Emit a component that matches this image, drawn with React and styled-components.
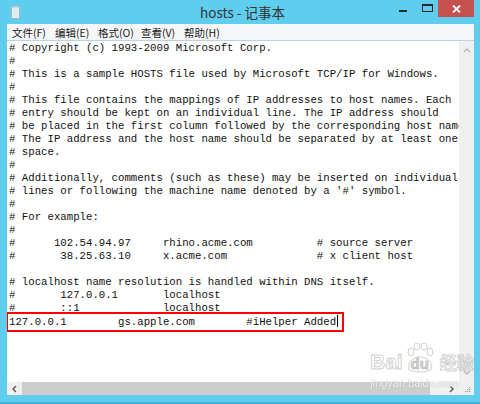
import React from "react";
import styled, { createGlobalStyle } from "styled-components";

const GlobalStyle = createGlobalStyle`
  html, body {
    margin: 0;
    padding: 0;
    background: #5fcdee;
  }
`;

const hostLines = [
  "# Copyright (c) 1993-2009 Microsoft Corp.",
  "#",
  "# This is a sample HOSTS file used by Microsoft TCP/IP for Windows.",
  "#",
  "# This file contains the mappings of IP addresses to host names. Each",
  "# entry should be kept on an individual line. The IP address should",
  "# be placed in the first column followed by the corresponding host name.",
  "# The IP address and the host name should be separated by at least one",
  "# space.",
  "#",
  "# Additionally, comments (such as these) may be inserted on individual",
  "# lines or following the machine name denoted by a '#' symbol.",
  "#",
  "# For example:",
  "#",
  "#      102.54.94.97     rhino.acme.com          # source server",
  "#       38.25.63.10     x.acme.com              # x client host",
  "",
  "# localhost name resolution is handled within DNS itself.",
  "#       127.0.0.1       localhost",
  "#       ::1             localhost",
];

const addedLine = "127.0.0.1        gs.apple.com        #iHelper Added";

const menus = ["文件(F)", "编辑(E)", "格式(O)", "查看(V)", "帮助(H)"];

const Window = styled.div`
  position: relative;
  width: 480px;
  height: 404px;
  box-sizing: border-box;
  background: #5fcdee;
  border-bottom: 2px solid #45b3d8;
  display: flex;
  flex-direction: column;
  padding: 0 6px 7px 7px;
  overflow: hidden;
`;

const TitleBar = styled.div`
  height: 24px;
  display: grid;
  grid-template-columns: 1fr auto 1fr;
  align-items: start;
  margin: 0 -6px 0 -7px;
  padding: 0 6px 0 11px;
`;

const TitleIcon = styled.svg`
  margin-top: 6px;
  width: 9px;
  height: 13px;
`;

const Title = styled.div`
  font-family: "Noto Sans CJK SC", "Noto Sans", sans-serif;
  font-size: 13.5px;
  line-height: 24px;
  color: #333;
`;

const Controls = styled.div`
  justify-self: end;
  display: flex;
  align-items: flex-start;
`;

const CtrlButton = styled.div`
  width: ${(p) => p.$w}px;
  height: 17px;
  display: flex;
  align-items: center;
  justify-content: center;
  background: ${(p) => (p.$close ? "#c75050" : "transparent")};
`;

const MenuBar = styled.div`
  height: 16px;
  display: flex;
  align-items: center;
  background: #f5f6f7;
  border-bottom: 1px solid #b9d1ea;
`;

const MenuItem = styled.span`
  padding: 0 5px;
  width: 33px;
  font-family: "Noto Sans CJK SC", "Noto Sans", sans-serif;
  font-size: 10.5px;
  color: #1a1a1a;
  white-space: nowrap;
`;

const EditArea = styled.div`
  flex: 1;
  min-height: 0;
  display: grid;
  grid-template-columns: 1fr 15px;
  grid-template-rows: 1fr 13px;
  background: #fff;
`;

const TextPane = styled.div`
  overflow: hidden;
  padding: 1px 0 0 2px;
  font-family: "Liberation Mono", "DejaVu Sans Mono", monospace;
  font-size: 10.7px;
  line-height: 13px;
  color: #111;
`;

const Line = styled.div`
  height: 13px;
  white-space: pre;
`;

const Added = styled.span`
  display: inline-block;
  padding-right: 3px;
  outline: 2px solid #ff0000;
  outline-offset: 1px;
`;

const Caret = styled.span`
  display: inline-block;
  width: 1px;
  height: 12px;
  margin-left: 1px;
  vertical-align: -2px;
  background: #000;
`;

const VScroll = styled.div`
  background: #f0f0f0;
  display: flex;
  flex-direction: column;
  justify-content: space-between;
  align-items: center;
  padding: 6px 0 5px;
`;

const HScroll = styled.div`
  background: #f0f0f0;
  display: grid;
  grid-template-columns: 15px 1fr 15px;
  align-items: stretch;
`;

const ArrowCell = styled.div`
  display: flex;
  align-items: center;
  justify-content: center;
`;

const Track = styled.div`
  display: flex;
`;

const Thumb = styled.div`
  flex: 0 0 408px;
  background: #cdcdcd;
`;

const Corner = styled.div`
  background: #f0f0f0;
  display: flex;
  align-items: flex-end;
  justify-content: flex-end;
  padding: 0 3px 2px 0;
`;

const Watermark = styled.div`
  position: absolute;
  left: 370px;
  top: 343px;
  display: flex;
  flex-direction: column;
  align-items: flex-start;
  pointer-events: none;
  color: rgba(255, 255, 255, 0.9);
`;

const LogoRow = styled.div`
  display: flex;
  align-items: flex-end;
  font-family: "Liberation Sans", Arial, sans-serif;
  font-weight: bold;
  font-size: 21px;
  line-height: 22px;
  -webkit-text-stroke: 1px rgba(150, 150, 150, 0.45);
`;

const Paw = styled.span`
  position: relative;
  display: inline-flex;
  align-items: flex-end;
  justify-content: center;
  width: 30px;
  height: 30px;
  font-size: 15px;
  line-height: 18px;
  margin: 0 2px;
`;

const PawToes = styled.svg`
  position: absolute;
  left: 0;
  top: 0;
`;

const PawText = styled.span`
  position: relative;
  color: rgba(190, 190, 190, 0.6);
`;

const LogoCjk = styled.span`
  font-family: "Noto Sans CJK SC", sans-serif;
  font-size: 17px;
  margin-left: 3px;
`;

const Domain = styled.div`
  margin-top: 4px;
  font-family: "Liberation Sans", Arial, sans-serif;
  font-size: 11px;
  line-height: 13px;
  color: rgba(255, 255, 255, 0.95);
  text-shadow: 0 0 1px rgba(110, 110, 110, 0.6);
`;

const Chevron = ({ dir, color }) => {
  const pts = {
    up: "1,5 4,2 7,5",
    down: "1,2 4,5 7,2",
    left: "5,1 2,4 5,7",
    right: "2,1 5,4 2,7",
  }[dir];
  return (
    <svg width="8" height="8" viewBox="0 0 8 8">
      <polyline points={pts} fill="none" stroke={color} strokeWidth="1.4" />
    </svg>
  );
};

export default function App() {
  return (
    <>
      <GlobalStyle />
      <Window>
        <TitleBar>
          <TitleIcon viewBox="0 0 9 13">
            <rect x="0.5" y="0.5" width="8" height="12" fill="#e4f1f7" stroke="#9fb3bd" />
            <rect x="0.5" y="0.5" width="8" height="2" fill="#c7d7df" />
            <line x1="2" y1="5" x2="7" y2="5" stroke="#d5e4ec" />
            <line x1="2" y1="7.5" x2="7" y2="7.5" stroke="#d5e4ec" />
            <line x1="2" y1="10" x2="7" y2="10" stroke="#d5e4ec" />
          </TitleIcon>
          <Title>hosts - 记事本</Title>
          <Controls>
            <CtrlButton $w={26}>
              <svg width="8" height="8" viewBox="0 0 8 8">
                <rect x="0" y="5" width="8" height="2" fill="#2a2a2a" />
              </svg>
            </CtrlButton>
            <CtrlButton $w={22}>
              <svg width="11" height="9" viewBox="0 0 11 9">
                <rect x="0.5" y="0.5" width="10" height="7" fill="none" stroke="#2a2a2a" />
                <rect x="0" y="0" width="11" height="2" fill="#2a2a2a" />
              </svg>
            </CtrlButton>
            <CtrlButton $w={36} $close>
              <svg width="9" height="8" viewBox="0 0 9 8">
                <line x1="1" y1="0.5" x2="8" y2="7.5" stroke="#fff" strokeWidth="1.8" />
                <line x1="8" y1="0.5" x2="1" y2="7.5" stroke="#fff" strokeWidth="1.8" />
              </svg>
            </CtrlButton>
          </Controls>
        </TitleBar>

        <MenuBar>
          {menus.map((m) => (
            <MenuItem key={m}>{m}</MenuItem>
          ))}
        </MenuBar>

        <EditArea>
          <TextPane>
            {hostLines.map((l, i) => (
              <Line key={i}>{l}</Line>
            ))}
            <Line>
              <Added>
                {addedLine}
                <Caret />
              </Added>
            </Line>
          </TextPane>
          <VScroll>
            <Chevron dir="up" color="#b8b8b8" />
            <Chevron dir="down" color="#b8b8b8" />
          </VScroll>
          <HScroll>
            <ArrowCell>
              <Chevron dir="left" color="#555" />
            </ArrowCell>
            <Track>
              <Thumb />
            </Track>
            <ArrowCell>
              <Chevron dir="right" color="#555" />
            </ArrowCell>
          </HScroll>
          <Corner>
            <svg width="6" height="6" viewBox="0 0 6 6">
              <rect x="4" y="0" width="1.2" height="1.2" fill="#9a9a9a" />
              <rect x="2" y="2" width="1.2" height="1.2" fill="#9a9a9a" />
              <rect x="4" y="2" width="1.2" height="1.2" fill="#9a9a9a" />
              <rect x="0" y="4" width="1.2" height="1.2" fill="#9a9a9a" />
              <rect x="2" y="4" width="1.2" height="1.2" fill="#9a9a9a" />
              <rect x="4" y="4" width="1.2" height="1.2" fill="#9a9a9a" />
            </svg>
          </Corner>
        </EditArea>

        <Watermark>
          <LogoRow>
            <span>Bai</span>
            <Paw>
              <PawToes width="30" height="30" viewBox="0 0 30 30">
                <g fill="rgba(255,255,255,0.85)" stroke="rgba(150,150,150,0.45)">
                  <ellipse cx="6" cy="9" rx="3" ry="4" />
                  <ellipse cx="12" cy="3.5" rx="3" ry="3.5" />
                  <ellipse cx="19" cy="3.5" rx="3" ry="3.5" />
                  <ellipse cx="25" cy="9" rx="3" ry="4" />
                  <path d="M4 27 Q2 18 10 15 Q15 12 20 15 Q28 18 26 27 Q15 31 4 27 Z" />
                </g>
              </PawToes>
              <PawText>du</PawText>
            </Paw>
            <LogoCjk>经验</LogoCjk>
          </LogoRow>
          <Domain>jingyan.baidu.com</Domain>
        </Watermark>
      </Window>
    </>
  );
}
